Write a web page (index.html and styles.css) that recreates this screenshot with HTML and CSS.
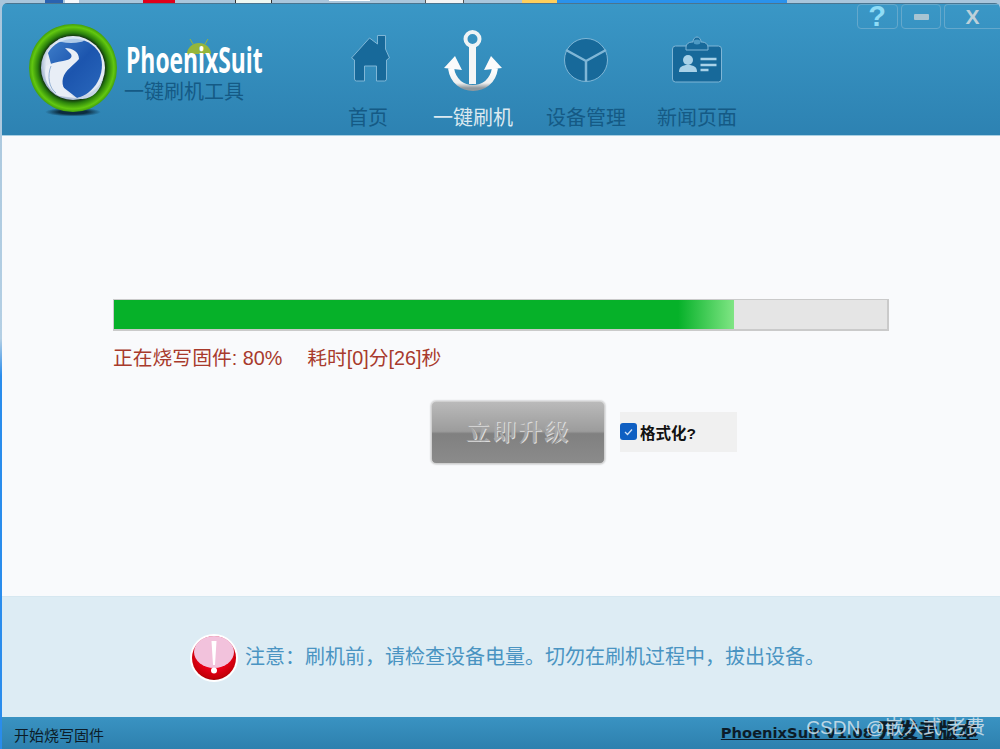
FILE: index.html
```html
<!DOCTYPE html>
<html lang="zh-CN">
<head>
<meta charset="utf-8">
<title>PhoenixSuit</title>
<link rel="stylesheet" href="styles.css">
</head>
<body>
<div class="desktop-strip">
  <span class="seg s1"></span><span class="seg s2"></span><span class="seg s3"></span><span class="seg s4"></span><span class="seg s5"></span><span class="seg s6"></span><span class="seg s7"></span><span class="seg s8"></span>
</div>
<div class="stage">
  <div class="side"></div>
  <div class="window">
    <header class="header">
      <div class="brand">
        <svg class="logo" width="90" height="96" viewBox="0 0 90 96">
          <defs>
            <radialGradient id="ring" cx=".5" cy=".5" r=".5">
              <stop offset=".72" stop-color="#0f3010"/><stop offset=".8" stop-color="#2a800c"/><stop offset=".93" stop-color="#62c810"/><stop offset="1" stop-color="#429f0c"/>
            </radialGradient>
            <radialGradient id="ball" cx=".55" cy=".45" r=".55">
              <stop offset="0" stop-color="#f0f4fa"/><stop offset=".85" stop-color="#e2e9f3"/><stop offset="1" stop-color="#a9bad2"/>
            </radialGradient>
            <linearGradient id="blue" x1="0" y1="0" x2="1" y2="1">
              <stop offset="0" stop-color="#3f7fca"/><stop offset=".5" stop-color="#1c55ae"/><stop offset="1" stop-color="#2a68bc"/>
            </linearGradient>
            <radialGradient id="shadow"><stop offset=".5" stop-color="#0c2c40"/><stop offset="1" stop-color="#0c2c40" stop-opacity="0"/></radialGradient>
          </defs>
          <ellipse cx="44" cy="88" rx="28" ry="4.500" fill="url(#shadow)"/>
          <circle cx="44" cy="44" r="44" fill="url(#ring)"/>
          <circle cx="44" cy="44" r="32" fill="url(#ball)"/>
          <path d="M19 29C28 12 58 8 71 30c7 20-6 40-23 44L30 60 22 40z" fill="url(#blue)"/>
          <path d="M17 42c6-3 11-4 17-5 6-1 10-3 8-7l-6-6c8 0 14 4 14 11-6 7-14 11-16 19-2 8 2 16 14 20l-18-2C19 66 14 54 17 42z" fill="#e8eef6"/>
          <path d="M22 42c-4 10-2 22 5 27" fill="none" stroke="#7fa2cc" stroke-width=".8"/>
          <path d="M48 74c12-1 22-9 26-20-2 14-14 24-26 20z" fill="#c6d6e8"/>
          <ellipse cx="42" cy="16" rx="13" ry="3" fill="#cfe2f2" opacity=".8"/>
        </svg>
        <div class="brand-text">
          <svg class="droid" width="24" height="15" viewBox="0 0 24 15">
            <path d="M0 15a12 11 0 0 1 24 0z" fill="#95b63a"/>
            <path d="M6 5 3 0M18 5l3-5" stroke="#95b63a" stroke-width="1"/>
          </svg>
          <div class="brand-name">PhoenixSuit</div>
          <div class="brand-sub">一键刷机工具</div>
        </div>
      </div>
      <nav class="nav">
        <a class="nav-item nav-home">
          <svg width="44" height="50" viewBox="0 0 44 50"><path class="dent" d="M21.500 6l8 6V3.500h8V17l4 9-3 2v19a2 2 0 0 1-2 2h-8V34h-12v15h-8a2 2 0 0 1-2-2V28l-3-2z"/></svg>
          <span>首页</span>
        </a>
        <a class="nav-item nav-flash active">
          <svg width="64" height="62" viewBox="0 0 64 62">
            <defs><linearGradient id="steel" x1="0" y1="0" x2="0" y2="1"><stop offset="0" stop-color="#fff"/><stop offset=".75" stop-color="#eef0f0"/><stop offset="1" stop-color="#8f989e"/></linearGradient></defs>
            <circle cx="31.500" cy="9" r="7" fill="none" stroke="#eef3f5" stroke-width="4"/>
            <path d="M31.500 16v38" stroke="#f4f6f6" stroke-width="7" fill="none"/>
            <path d="M10 38c2 14 12 20 22 20s20-6 22-20" fill="none" stroke="url(#steel)" stroke-width="6"/>
            <path d="M3 38 14 26l7 14zM61 38 50 26l-7 14z" fill="#fbfbfb"/>
          </svg>
          <span>一键刷机</span>
        </a>
        <a class="nav-item nav-device">
          <svg width="48" height="48" viewBox="0 0 48 48"><circle class="dent" cx="24" cy="24" r="21.500"/><path d="M24 25v20M24 25 4 14M24 25l20-11" stroke="#7fb6d6" stroke-width="2.500" fill="none"/></svg>
          <span>设备管理</span>
        </a>
        <a class="nav-item nav-news">
          <svg width="52" height="50" viewBox="0 0 52 50">
            <rect class="dent" x="1.500" y="11" width="49" height="36" rx="3"/>
            <path d="M15 15h22v-3a6 5 0 0 0-6-5h-1a4 5 0 0 0-8 0h-1a6 5 0 0 0-6 5z" class="dent"/>
            <ellipse cx="26" cy="7" rx="3.500" ry="2.500" fill="#4d9ac4"/>
            <circle cx="17" cy="25" r="5" fill="#a9d2e8"/>
            <path d="M8 37c0-5 3-7 9-7s9 2 9 7z" fill="#a9d2e8"/>
            <path d="M29.500 24h16M29.500 30h16M29.500 35h8" stroke="#a9d2e8" stroke-width="2.500"/>
          </svg>
          <span>新闻页面</span>
        </a>
      </nav>
      <div class="win-controls">
        <button class="ctl ctl-help"><span class="q">?</span></button>
        <button class="ctl ctl-min"><i></i></button>
        <button class="ctl ctl-close">X</button>
      </div>
    </header>
    <main class="content">
      <div class="progress"><div class="progress-fill" style="width:80.2%"></div></div>
      <p class="status"><span>正在烧写固件: 80%</span><span>耗时[0]分[26]秒</span></p>
      <div class="actions">
        <button class="upgrade">立即升级</button>
        <label class="format"><i class="check"><svg width="17" height="17" viewBox="0 0 17 17"><path d="M5 9l2.500 2.500L12 6.500" fill="none" stroke="#cfe0f5" stroke-width="1.300"/></svg></i>格式化?</label>
      </div>
    </main>
    <section class="notice">
      <svg class="alert" width="48" height="50" viewBox="0 0 48 50">
        <defs>
          <radialGradient id="red" cx=".5" cy=".4" r=".65"><stop offset=".5" stop-color="#f0001c"/><stop offset=".85" stop-color="#c40008"/><stop offset="1" stop-color="#7a0004"/></radialGradient>
        </defs>
        <circle cx="24" cy="25" r="24" fill="#fff"/>
        <circle cx="24" cy="25" r="22" fill="url(#red)"/>
        <ellipse cx="24" cy="19" rx="20" ry="16" fill="#f2c2dc"/>
        <path d="M21.500 8h5l-1.500 24h-2z" fill="#fff"/>
        <circle cx="24" cy="37.500" r="3" fill="#fff"/>
      </svg>
      <p>注意：刷机前，请检查设备电量。切勿在刷机过程中，拔出设备。</p>
    </section>
    <footer class="footer">
      <span class="foot-left">开始烧写固件</span>
      <a class="foot-right">PhoenixSuit V1.08 <b>开发者版本</b></a>
    </footer>
  </div>
</div>
<div class="watermark">CSDN @嵌入式 老费</div>
</body>
</html>
```
FILE: styles.css
```css
* { box-sizing: border-box; }
html, body { margin: 0; height: 100%; }
body {
  width: 1000px;
  height: 749px;
  overflow: hidden;
  position: relative;
  display: flex;
  flex-direction: column;
  background: #a9c6dc;
  font-family: "Liberation Sans", "Noto Sans CJK SC", sans-serif;
}
.desktop-strip { height: 3px; display: flex; flex: none; }
.seg { display: block; height: 3px; flex: none; }
.s1 { margin-left: 45px; width: 18px; background: #2a62b0; }
.s2 { margin-left: 2px; width: 14px; background: #f4f8fc; }
.s3 { margin-left: 64px; width: 32px; background: #e0001a; }
.s4 { margin-left: 60px; width: 37px; background: #eef8f2; border-left: 1px solid #333; border-right: 1px solid #333; }
.s5 { margin-left: 57px; width: 41px; height: 1px; background: #fff; }
.s6 { margin-left: 55px; width: 39px; background: #f4f4f4; border-left: 1px solid #555; border-right: 1px solid #555; }
.s7 { margin-left: 58px; width: 35px; background: #ffcf5c; }
.s8 { width: 230px; background: #2a92ec; }
.stage { flex: 1; display: flex; min-height: 0; }
.side {
  width: 2px;
  flex: none;
  background: linear-gradient(#a9c6dc 0, #b4cfe4 45%, #2a8cec 50%, #2a8cec 100%);
}
.window {
  flex: 1;
  min-width: 0;
  display: flex;
  flex-direction: column;
  background: #f9fafc;
  border-radius: 5px 5px 0 0;
  overflow: hidden;
}
.header {
  height: 133px;
  flex: none;
  position: relative;
  display: flex;
  background: linear-gradient(#3a97c6, #2d82b2);
  border-top: 1px solid #4a7590;
  border-bottom: 1px solid #a9cfe2;
}
.brand { display: flex; width: 335px; flex: none; padding: 20px 0 0 27px; }
.logo { flex: none; }
.brand-text { position: relative; margin-left: 7px; padding-top: 18px; }
.droid { position: absolute; left: 61px; top: 15px; }
.brand-name {
  position: relative;
  font-family: "Open Sans", sans-serif;
  font-weight: 700;
  font-size: 36px;
  line-height: 36px;
  color: #fff;
  transform: scaleX(.635);
  transform-origin: left;
  white-space: nowrap;
}
.brand-sub { font-size: 20px; line-height: 24px; margin: 2px 0 0 -2px; color: #155a85; white-space: nowrap; }
.nav { display: flex; align-items: flex-start; }
.nav-item {
  display: flex;
  flex-direction: column;
  align-items: center;
  height: 126px;
  font-size: 20px;
  line-height: 24px;
  color: #155a85;
  white-space: nowrap;
}
.nav-item svg { display: block; flex: none; }
.nav-item.active span { color: #dce9f0; }
.nav-home { width: 62px; padding-top: 28px; }
.nav-home svg { margin-left: 3px; }
.nav-home span { margin-top: 24px; }
.nav-flash { width: 80px; margin-left: 34px; padding-top: 26px; }
.nav-flash span { margin-top: 14px; }
.nav-device { width: 80px; margin-left: 33px; padding-top: 32px; }
.nav-device span { margin-top: 22px; }
.nav-news { width: 80px; margin-left: 31px; padding-top: 31px; }
.nav-news span { margin-top: 21px; }
.dent { fill: #17699a; stroke: #7fb6d6; stroke-width: 1; stroke-linejoin: round; }
.win-controls { position: absolute; top: 0; right: 0; display: flex; gap: 3px; }
.ctl {
  height: 25px;
  padding: 0;
  display: flex;
  align-items: center;
  justify-content: center;
  background: transparent;
  border: 1px solid #64a8cc;
  border-radius: 4px;
  font-family: "Liberation Sans", sans-serif;
  font-weight: 700;
  line-height: 23px;
}
.ctl-help { width: 41px; color: #8fdcf6; font-size: 20px; }
.q { display: block; transform: scale(1.45); }
.ctl-min { width: 40px; }
.ctl-min i { display: block; width: 15px; height: 6px; border-radius: 1px; background: #a8c4d2; }
.ctl-close { width: 56px; color: #bcd0da; font-size: 21px; border-right: 0; border-top-right-radius: 0; border-bottom-right-radius: 0; }
.content { flex: 1; padding: 163px 111px 0 111px; min-height: 0; }
.progress {
  height: 32px;
  background: #e5e5e5;
  border: 1px solid #cacaca;
  border-right-width: 2px;
  border-bottom-width: 2px;
}
.progress-fill {
  height: 100%;
  background: linear-gradient(90deg, #06b129 0, #06b129 91%, #72e07a 99%, #80e484 100%);
}
.status {
  margin: 14px 0 0;
  display: flex;
  gap: 25px;
  font-size: 19.800px;
  line-height: 26px;
  color: #a83a2c;
}
.actions { display: flex; align-items: center; margin: 30px 0 0 318px; }
.upgrade {
  width: 174px;
  height: 63px;
  padding: 0 0 6px;
  border: 1px solid #d0d0d0;
  border-radius: 5px;
  background: linear-gradient(#bababa 0, #9c9c9c 48%, #808080 52%, #8b8b8b 100%);
  box-shadow: 0 0 2px #999;
  color: #a6a6a6;
  font-family: "Liberation Serif", "Noto Serif CJK SC", "Noto Sans CJK SC", serif;
  font-weight: 700;
  font-size: 24px;
  letter-spacing: 2px;
  text-shadow: 1px 1px 0 #dcdcdc;
}
.format {
  display: flex;
  align-items: center;
  width: 117px;
  height: 40px;
  margin: 0 0 2px 15px;
  background: #f0f0f0;
  font-size: 15.500px;
  font-weight: 700;
  color: #111;
}
.check {
  width: 17px;
  height: 17px;
  margin-right: 3px;
  border-radius: 3px;
  background: #0f5fc2;
  display: block;
}
.check svg { display: block; }
.notice {
  height: 121px;
  flex: none;
  display: flex;
  align-items: center;
  padding: 0 0 0 188px;
  gap: 7px;
  background: #ddecf4;
  border-top: 1px solid #d6e7f0;
}
.alert { flex: none; margin-top: 2px; }
.notice p { margin: 0; font-size: 20px; line-height: 28px; color: #4a94c2; white-space: nowrap; }
.footer {
  height: 32px;
  flex: none;
  display: flex;
  justify-content: space-between;
  align-items: center;
  padding: 2px 22px 0 12px;
  background: linear-gradient(#3a93c2, #2d80ae);
}
.foot-left { font-size: 15px; color: #0c1c28; }
.foot-right {
  margin-bottom: 5px;
  font-family: "DejaVu Sans", "Noto Sans CJK SC", sans-serif;
  font-weight: 700;
  font-size: 14.700px;
  line-height: 20px;
  color: #0c1c28;
  text-decoration: underline;
  white-space: nowrap;
}
.foot-right b { font-family: "Noto Sans CJK SC", sans-serif; font-size: 20px; }
.watermark {
  position: absolute;
  right: 15px;
  bottom: 10px;
  font-size: 19px;
  line-height: 22px;
  color: rgba(225, 235, 240, .8);
}
```
